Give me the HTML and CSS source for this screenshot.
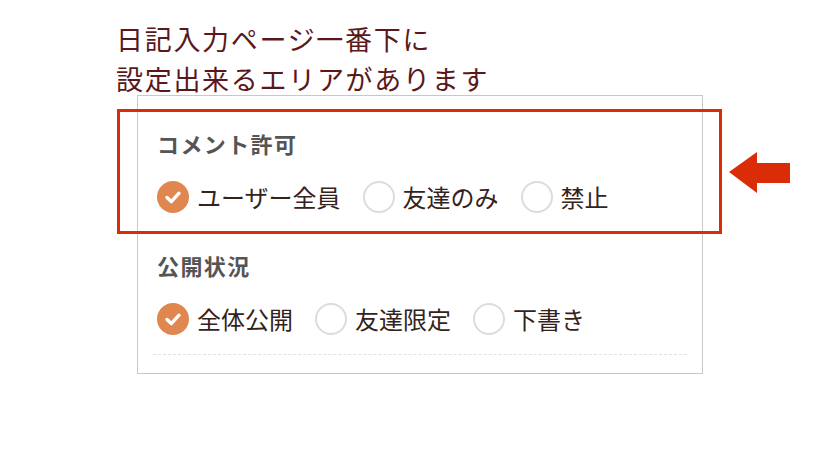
FILE: index.html
```html
<!DOCTYPE html>
<html lang="ja">
<head>
<meta charset="utf-8">
<title>日記の設定</title>
<link rel="stylesheet" href="styles.css">
</head>
<body>
<div class="page">
  <h1 class="title">日記入力ページ一番下に<br>設定出来るエリアがあります</h1>
  <div class="stage">
    <div class="card">
      <section class="group group-highlight">
        <h2 class="group-title">コメント許可</h2>
        <div class="options">
          <label class="option"><span class="radio checked"><svg viewBox="0 0 32 32" width="32" height="32"><circle cx="16" cy="16" r="16" fill="#e0874f"/><polyline points="10,16.5 14.3,20.6 22,12.2" fill="none" stroke="#fff" stroke-width="3.4" stroke-linecap="round" stroke-linejoin="round"/></svg></span><span class="option-text">ユーザー全員</span></label>
          <label class="option"><span class="radio"></span><span class="option-text">友達のみ</span></label>
          <label class="option"><span class="radio"></span><span class="option-text">禁止</span></label>
        </div>
      </section>
      <section class="group">
        <h2 class="group-title">公開状況</h2>
        <div class="options">
          <label class="option"><span class="radio checked"><svg viewBox="0 0 32 32" width="32" height="32"><circle cx="16" cy="16" r="16" fill="#e0874f"/><polyline points="10,16.5 14.3,20.6 22,12.2" fill="none" stroke="#fff" stroke-width="3.4" stroke-linecap="round" stroke-linejoin="round"/></svg></span><span class="option-text">全体公開</span></label>
          <label class="option"><span class="radio"></span><span class="option-text">友達限定</span></label>
          <label class="option"><span class="radio"></span><span class="option-text">下書き</span></label>
        </div>
      </section>
      <div class="divider"></div>
    </div>
    <svg class="arrow" viewBox="0 0 61 42" width="61" height="42"><polygon points="0,20 28,0 28,11 61,11 61,31 28,31 28,41" fill="#db2c08"/></svg>
  </div>
</div>
</body>
</html>
```

FILE: styles.css
```css
html, body {
  margin: 0;
  padding: 0;
  background: #ffffff;
}

body {
  font-family: "Noto Sans CJK JP", "Noto Sans", sans-serif;
}

.page {
  padding-top: 19px;
}

.title {
  margin: 0;
  padding-left: 116px;
  font-size: 27px;
  line-height: 40px;
  font-weight: 400;
  letter-spacing: 1.7px;
  color: #5a181c;
}

.stage {
  display: flex;
  align-items: flex-start;
  margin-top: -4px;
}

.card {
  margin-left: 137px;
  width: 566px;
  box-sizing: border-box;
  border: 1px solid #c8c8c8;
  padding: 0 19px 18px;
}

.group-highlight {
  margin: 13px -39px 0 -40px;
  padding: 16px 36px 18px 37px;
  border: 3px solid #db2c08;
}

.group + .group {
  margin-top: 16px;
}

.group-title {
  margin: 0;
  font-size: 22px;
  line-height: 30px;
  font-weight: 700;
  letter-spacing: 1.4px;
  color: #555555;
}

.options {
  display: flex;
  align-items: center;
  gap: 22px;
  margin-top: 23px;
}

.option {
  display: flex;
  align-items: center;
  gap: 8px;
}

.radio {
  display: block;
  width: 32px;
  height: 32px;
  box-sizing: border-box;
  border: 2px solid #dcdcdc;
  border-radius: 50%;
}

.radio.checked {
  border: none;
}

.radio svg {
  display: block;
}

.option-text {
  font-size: 24px;
  line-height: 32px;
  color: #33231c;
}

.divider {
  margin: 19px -4px 0;
  border-top: 1px dashed #e2e2e2;
}

.arrow {
  display: block;
  margin-left: 26px;
  margin-top: 57px;
}
```
